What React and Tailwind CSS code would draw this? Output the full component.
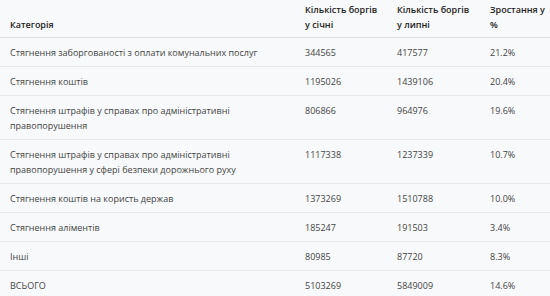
import React from 'react';

const rows = [
  ['Стягнення заборгованості з оплати комунальних послуг', '344565', '417577', '21.2%'],
  ['Стягнення коштів', '1195026', '1439106', '20.4%'],
  ['Стягнення штрафів у справах про адміністративні правопорушення', '806866', '964976', '19.6%'],
  ['Стягнення штрафів у справах про адміністративні правопорушення у сфері безпеки дорожнього руху', '1117338', '1237339', '10.7%'],
  ['Стягнення коштів на користь держав', '1373269', '1510788', '10.0%'],
  ['Стягнення аліментів', '185247', '191503', '3.4%'],
  ['Інші', '80985', '87720', '8.3%'],
  ['ВСЬОГО', '5103269', '5849009', '14.6%'],
];

const App = () => {
  return (
    <div className="w-[550px] h-[296px] overflow-hidden bg-[#f8f9fa] font-['Open_Sans',_'Noto_Sans',_sans-serif] text-[9px] leading-[15px] text-[#444]">
      <table className="w-full table-fixed border-collapse">
        <colgroup>
          <col className="w-[295px]" />
          <col className="w-[92px]" />
          <col className="w-[93px]" />
          <col />
        </colgroup>
        <thead>
          <tr className="border-b border-[#dee2e6]">
            <th className="pl-[10px] pr-[4px] pt-[2px] pb-[5px] text-left align-bottom font-semibold text-[#222]">Категорія</th>
            <th className="pl-[10px] pr-[4px] pt-[2px] pb-[5px] text-left align-bottom font-semibold text-[#222]">Кількість боргів у січні</th>
            <th className="pl-[10px] pr-[4px] pt-[2px] pb-[5px] text-left align-bottom font-semibold text-[#222]">Кількість боргів у липні</th>
            <th className="pl-[10px] pr-0 pt-[2px] pb-[5px] text-left align-bottom font-semibold text-[#222]">Зростання у %</th>
          </tr>
        </thead>
        <tbody>
          {rows.map((row, i) => (
            <tr key={i} className="border-b border-[#e6e8ea]">
              {row.map((cell, j) => (
                <td key={j} className="pl-[10px] pr-[4px] pt-[7px] pb-[6px] align-top">{cell}</td>
              ))}
            </tr>
          ))}
        </tbody>
      </table>
    </div>
  );
};

export default App;
